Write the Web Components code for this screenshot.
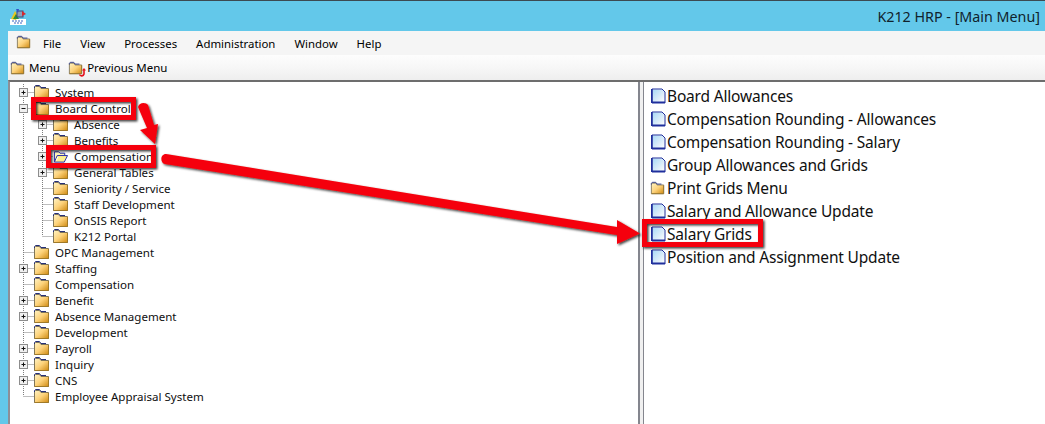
<!DOCTYPE html>
<html>
<head>
<meta charset="utf-8">
<title>K212 HRP</title>
<style>
  html, body { margin: 0; height: 100%; overflow: hidden; background: #63c8ea; }
</style>
</head>
<body>
<hrp-window>
  <hrp-titlebar slot="title">K212 HRP - [Main Menu]</hrp-titlebar>
  <hrp-menubar slot="menu">
    <span>File</span><span>View</span><span>Processes</span><span>Administration</span><span>Window</span><span>Help</span>
  </hrp-menubar>
  <hrp-toolbar slot="tools"></hrp-toolbar>
  <hrp-tree slot="left">
    <tree-node expander="plus">System</tree-node>
    <tree-node expander="minus">Board Control</tree-node>
    <tree-node level="1" expander="plus">Absence</tree-node>
    <tree-node level="1" expander="plus">Benefits</tree-node>
    <tree-node level="1" expander="plus" open>Compensation</tree-node>
    <tree-node level="1" expander="plus">General Tables</tree-node>
    <tree-node level="1">Seniority / Service</tree-node>
    <tree-node level="1">Staff Development</tree-node>
    <tree-node level="1">OnSIS Report</tree-node>
    <tree-node level="1" last>K212 Portal</tree-node>
    <tree-node>OPC Management</tree-node>
    <tree-node expander="plus">Staffing</tree-node>
    <tree-node>Compensation</tree-node>
    <tree-node expander="plus">Benefit</tree-node>
    <tree-node expander="plus">Absence Management</tree-node>
    <tree-node>Development</tree-node>
    <tree-node expander="plus">Payroll</tree-node>
    <tree-node expander="plus">Inquiry</tree-node>
    <tree-node expander="plus">CNS</tree-node>
    <tree-node last>Employee Appraisal System</tree-node>
  </hrp-tree>
  <hrp-list slot="right">
    <list-item>Board Allowances</list-item>
    <list-item>Compensation Rounding - Allowances</list-item>
    <list-item>Compensation Rounding - Salary</list-item>
    <list-item>Group Allowances and Grids</list-item>
    <list-item kind="folder">Print Grids Menu</list-item>
    <list-item>Salary and Allowance Update</list-item>
    <list-item>Salary Grids</list-item>
    <list-item>Position and Assignment Update</list-item>
  </hrp-list>
  <hrp-callouts slot="overlay"></hrp-callouts>
</hrp-window>

<script>
(() => {
  const UI_FONT = '"Noto Sans", "DejaVu Sans", sans-serif';
  let gradientId = 0;

  // Small closed yellow folder used by the tree, toolbar and list
  const folderIcon = (width = 15, height = 16) => {
    const id = `fold${gradientId++}`;
    return `
      <svg width="${width}" height="${height}" viewBox="0 0 15 16">
        <defs>
          <linearGradient id="${id}" x1="0" y1="0" x2="1" y2="1">
            <stop offset="0" stop-color="#fff3c4"/>
            <stop offset="0.5" stop-color="#fdd27a"/>
            <stop offset="1" stop-color="#cf8a12"/>
          </linearGradient>
        </defs>
        <path d="M0.5 14.5V3.5L1.5 2.5H5.5L7 4.5H14.5V14.5Z" fill="url(#${id})" stroke="#7f7558"/>
        <path d="M0.5 4V2.5L1.5 1.5H5.5L7 3.5H12" fill="none" stroke="#26307a"/>
        <path d="M0.5 14.5H14.5V5" fill="none" stroke="#a07a28"/>
      </svg>`;
  };

  const openFolderIcon = () => `
    <svg width="15" height="16" viewBox="0 0 16 16">
      <path d="M1.5 14V3.5H6L7.5 5H12.5V7" fill="#fff7b8" stroke="#1c22a8"/>
      <path d="M1.5 14.5L4.5 7.5H15.5L12 14.5Z" fill="#fdf08f" stroke="#1c22a8"/>
      <path d="M5 9L3.5 13" stroke="#fff" fill="none"/>
    </svg>`;

  const docIcon = () => {
    const id = `doc${gradientId++}`;
    return `
      <svg width="15" height="16" viewBox="0 0 15 16">
        <defs>
          <linearGradient id="${id}" x1="0" y1="0" x2="1" y2="1">
            <stop offset="0" stop-color="#a8d8f6"/>
            <stop offset="0.6" stop-color="#dcedfa"/>
            <stop offset="1" stop-color="#ffffff"/>
          </linearGradient>
        </defs>
        <path d="M1.5 1.5H11L13.5 4V14.5H1.5Z" fill="url(#${id})"/>
        <path d="M1 15V1H11L14 4V15" fill="none" stroke="#1f2f9c" stroke-width="1"/>
        <path d="M1 14.5H14" stroke="#1f2f9c" stroke-width="2"/>
        <path d="M0.8 1V15" stroke="#1f2f9c" stroke-width="1.6"/>
      </svg>`;
  };

  class HrpWindow extends HTMLElement {
    constructor() {
      super();
      this.attachShadow({ mode: 'open' });
      this.shadowRoot.innerHTML = `
        <style>
          :host {
            display: flex;
            flex-direction: column;
            position: relative;
            width: 1045px;
            height: 424px;
            overflow: hidden;
            background: #63c8ea;
            font-family: ${UI_FONT};
            color: #000;
          }
          .body {
            display: flex;
            flex-direction: column;
            flex: 1;
            min-height: 0;
            margin-left: 8px;
          }
          .panes {
            display: flex;
            flex: 1;
            min-height: 0;
            border-top: 2px solid #6d6d6d;
            border-left: 2px solid #8d8f97;
            background: #fff;
          }
          .left { display: block; width: 628px; flex: none; }
          .sash {
            width: 3px;
            flex: none;
            background: #f0f0f0;
            border-left: 2px solid #84868e;
            border-right: 1px solid #84868e;
          }
          .right { display: block; flex: 1; }
        </style>
        <slot name="title"></slot>
        <div class="body">
          <slot name="menu"></slot>
          <slot name="tools"></slot>
          <div class="panes">
            <div class="left"><slot name="left"></slot></div>
            <div class="sash"></div>
            <div class="right"><slot name="right"></slot></div>
          </div>
        </div>
        <slot name="overlay"></slot>
      `;
    }
  }

  class HrpTitlebar extends HTMLElement {
    constructor() {
      super();
      this.attachShadow({ mode: 'open' });
      this.shadowRoot.innerHTML = `
        <style>
          :host {
            display: flex;
            align-items: center;
            justify-content: space-between;
            height: 31px;
            box-sizing: border-box;
            padding: 0 5px 0 10px;
            border-top: 1px solid #3c4a52;
            background: #63c8ea;
            font-size: 14.3px;
            color: #10222c;
          }
          svg { display: block; }
        </style>
        <svg width="17" height="17" viewBox="0 0 17 17">
          <rect x="0" y="11" width="16" height="6" fill="#fff"/>
          <path d="M1 11L5 3L8 8L6 12Z" fill="#e8c71e"/>
          <path d="M3 11L6 6L9 11Z" fill="#2e8f3a"/>
          <rect x="7" y="3" width="6" height="6" fill="#8f9fb8" stroke="#3b4a78"/>
          <path d="M6 1L9 1L8 5Z" fill="#3350c8"/>
          <path d="M12 3L16 6L12 8Z" fill="#d8262c"/>
          <path d="M2 13H14M4 15H12" stroke="#3b62c0" stroke-dasharray="2 1"/>
        </svg>
        <span><slot></slot></span>
      `;
    }
  }

  class HrpMenubar extends HTMLElement {
    constructor() {
      super();
      this.attachShadow({ mode: 'open' });
      this.shadowRoot.innerHTML = `
        <style>
          :host {
            display: flex;
            align-items: center;
            height: 24px;
            flex: none;
            padding-left: 8px;
            background: #f5f5f5;
            font-size: 11.4px;
          }
          .logo { display: block; margin-right: 12px; }
          ::slotted(span) { margin-right: 19px; }
        </style>
        <span class="logo">${folderIcon(15, 14)}</span>
        <slot></slot>
      `;
    }
  }

  class HrpToolbar extends HTMLElement {
    constructor() {
      super();
      this.attachShadow({ mode: 'open' });
      this.shadowRoot.innerHTML = `
        <style>
          :host {
            display: flex;
            align-items: center;
            height: 25px;
            flex: none;
            padding-left: 2px;
            background: linear-gradient(#fdfdfd, #f6f6f6 55%, #eeeeee);
            font-size: 11.5px;
          }
          .tool { display: flex; align-items: center; gap: 4px; margin-right: 8px; }
          .icon { display: block; position: relative; height: 14px; }
          svg { display: block; }
          .back { position: absolute; right: -3px; bottom: -2px; }
        </style>
        <div class="tool"><span class="icon">${folderIcon(15, 14)}</span><span>Menu</span></div>
        <div class="tool">
          <span class="icon">${folderIcon(15, 14)}
            <svg class="back" width="8" height="9" viewBox="0 0 8 9">
              <path d="M6 1.5V6A2.4 2.4 0 0 1 1.5 6.5" fill="none" stroke="#e4121c" stroke-width="1.6"/>
              <path d="M4 2.5L6 0L8 2.5Z" fill="#e4121c"/>
            </svg>
          </span>
          <span>Previous Menu</span>
        </div>
      `;
    }
  }

  class HrpTree extends HTMLElement {
    constructor() {
      super();
      this.attachShadow({ mode: 'open' });
      this.shadowRoot.innerHTML = `
        <style>
          :host { display: block; padding-top: 2px; font-size: 11.55px; color: #101010; }
        </style>
        <slot></slot>
      `;
    }
  }

  class TreeNode extends HTMLElement {
    constructor() {
      super();
      this.attachShadow({ mode: 'open' });
    }

    connectedCallback() {
      const level = Number(this.getAttribute('level') || 0);
      const expander = this.getAttribute('expander');
      const last = this.hasAttribute('last');
      const gutter = level === 0 ? 24 : 43;
      const rootX = 13.5;
      const x = level === 0 ? rootX : 32.5;
      const dots = 'stroke="#7d7d7d" stroke-dasharray="1 1" fill="none"';

      let lines = '';
      if (level === 1) lines += `<path d="M${rootX} 0V16" ${dots}/>`;
      lines += `<path d="M${x} 0V${last ? 8 : 16}" ${dots}/>`;
      lines += `<path d="M${x} 8.5H${gutter}" ${dots}/>`;

      let box = '';
      if (expander) {
        box = `<rect x="${x - 4}" y="4.5" width="8" height="8" fill="#f0f0f0" stroke="#8d8d8d"/>
          <path d="M${x - 2} 8.5H${x + 2}" stroke="#111"/>`;
        if (expander === 'plus') box += `<path d="M${x} 6.5V10.5" stroke="#111"/>`;
      }

      this.shadowRoot.innerHTML = `
        <style>
          :host { display: flex; align-items: center; height: 16px; }
          svg { display: block; flex: none; }
          .label { margin-left: 6px; white-space: nowrap; line-height: 16px; position: relative; top: 1px; }
        </style>
        <svg width="${gutter}" height="16">${lines}${box}</svg>
        ${this.hasAttribute('open') ? openFolderIcon() : folderIcon()}
        <span class="label"><slot></slot></span>
      `;
    }
  }

  class HrpList extends HTMLElement {
    constructor() {
      super();
      this.attachShadow({ mode: 'open' });
      this.shadowRoot.innerHTML = `
        <style>
          :host { display: block; padding: 2px 0 0 7px; font-size: 15.5px; letter-spacing: -0.18px; }
        </style>
        <slot></slot>
      `;
    }
  }

  class ListItem extends HTMLElement {
    constructor() {
      super();
      this.attachShadow({ mode: 'open' });
    }

    connectedCallback() {
      const isFolder = this.getAttribute('kind') === 'folder';
      this.shadowRoot.innerHTML = `
        <style>
          :host { display: flex; align-items: center; height: 23px; color: #101010; }
          svg { display: block; flex: none; }
          .label { margin-left: 1px; white-space: nowrap; }
          .icon { margin-left: ${isFolder ? -2 : 0}px; display: block; }
        </style>
        <span class="icon">${isFolder ? folderIcon(17, 14) : docIcon()}</span>
        <span class="label"><slot></slot></span>
      `;
    }
  }

  // Red annotation boxes and arrows painted over the screenshot
  class HrpCallouts extends HTMLElement {
    constructor() {
      super();
      this.attachShadow({ mode: 'open' });
      this.shadowRoot.innerHTML = `
        <style>
          :host { display: block; position: absolute; inset: 0; pointer-events: none; }
          svg { display: block; }
        </style>
        <svg width="1045" height="424" viewBox="0 0 1045 424">
          <defs>
            <filter id="shade" x="-10%" y="-30%" width="120%" height="160%">
              <feDropShadow dx="1.5" dy="1.5" stdDeviation="1" flood-color="#000" flood-opacity="0.75"/>
            </filter>
          </defs>
          <g filter="url(#shade)" fill="#f5000a" stroke="none">
            <path fill-rule="evenodd" d="M31 97H136V120H31ZM36 102V115H131V102Z"/>
            <path fill-rule="evenodd" d="M46 145H156V168H46ZM51 150V163H151V150Z"/>
            <path fill-rule="evenodd" d="M642 219H763V247H642ZM647 224V242H758V224Z"/>
            <path d="M138 107C139 102 146 102 148 105L154 125L158 124L155 144L140 130L147 128Z"/>
            <path d="M166 154L617 227V220L640 233.5L617 244V235L165 164C160 163 160 154 166 154Z"/>
          </g>
        </svg>
      `;
    }
  }

  customElements.define('hrp-window', HrpWindow);
  customElements.define('hrp-titlebar', HrpTitlebar);
  customElements.define('hrp-menubar', HrpMenubar);
  customElements.define('hrp-toolbar', HrpToolbar);
  customElements.define('hrp-tree', HrpTree);
  customElements.define('tree-node', TreeNode);
  customElements.define('hrp-list', HrpList);
  customElements.define('list-item', ListItem);
  customElements.define('hrp-callouts', HrpCallouts);
})();
</script>
</body>
</html>
